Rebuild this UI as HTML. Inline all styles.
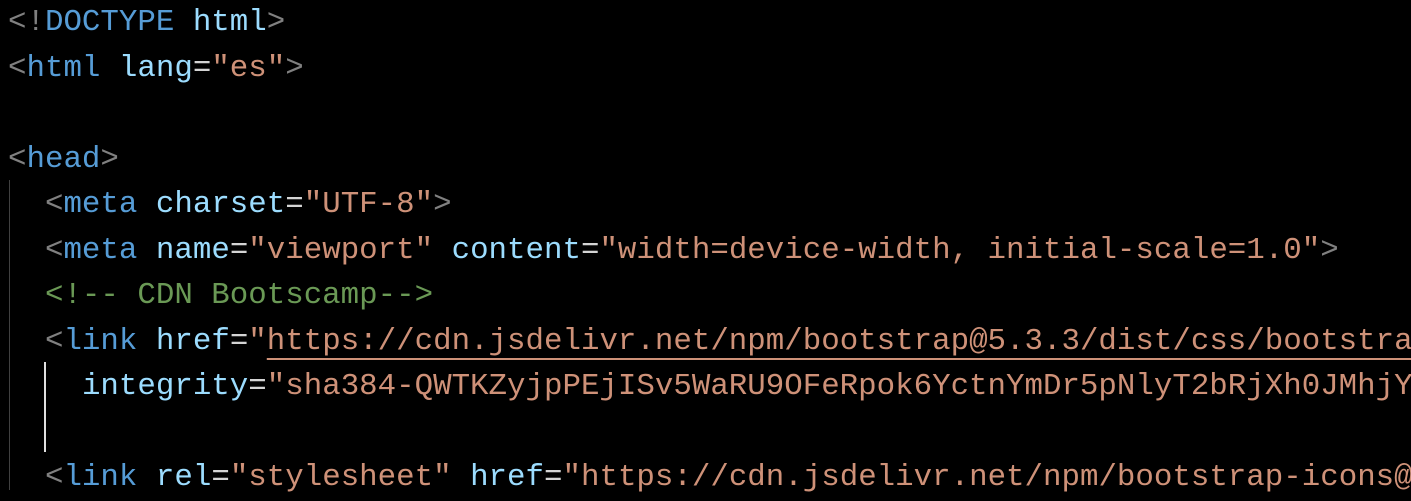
<!DOCTYPE html>
<html><head><style>
html,body{margin:0;padding:0;background:#000;width:1411px;height:482px;overflow:hidden}
.c{position:absolute;left:8px;top:0px;font-family:"Liberation Mono",monospace;font-size:30.8px;line-height:45.5px;white-space:pre;color:#d4d4d4}
.g{color:#808080}.t{color:#569cd6}.a{color:#9cdcfe}.s{color:#ce9178}.m{color:#6a9955}
.u{text-decoration:underline;text-decoration-thickness:2px;text-underline-offset:9px}
.ig{position:absolute;left:9px;top:180px;width:1px;height:310px;background:#404040}
.ia{position:absolute;left:44px;top:362px;width:2px;height:90px;background:#e0e0e0}
</style></head><body>
<div class="ig"></div><div class="ia"></div>
<div class="c"><span class="g">&lt;!</span><span class="t">DOCTYPE</span> <span class="a">html</span><span class="g">&gt;</span>
<span class="g">&lt;</span><span class="t">html</span> <span class="a">lang</span>=<span class="s">"es"</span><span class="g">&gt;</span>

<span class="g">&lt;</span><span class="t">head</span><span class="g">&gt;</span>
  <span class="g">&lt;</span><span class="t">meta</span> <span class="a">charset</span>=<span class="s">"UTF-8"</span><span class="g">&gt;</span>
  <span class="g">&lt;</span><span class="t">meta</span> <span class="a">name</span>=<span class="s">"viewport"</span> <span class="a">content</span>=<span class="s">"width=device-width, initial-scale=1.0"</span><span class="g">&gt;</span>
  <span class="m">&lt;!-- CDN Bootscamp--&gt;</span>
  <span class="g">&lt;</span><span class="t">link</span> <span class="a">href</span>=<span class="s">"<span class="u">https://cdn.jsdelivr.net/npm/bootstrap@5.3.3/dist/css/bootstra</span></span>
    <span class="a">integrity</span>=<span class="s">"sha384-QWTKZyjpPEjISv5WaRU9OFeRpok6YctnYmDr5pNlyT2bRjXh0JMhjY</span>

  <span class="g">&lt;</span><span class="t">link</span> <span class="a">rel</span>=<span class="s">"stylesheet"</span> <span class="a">href</span>=<span class="s">"https://cdn.jsdelivr.net/npm/bootstrap-icons@</span></div>
</body></html>
